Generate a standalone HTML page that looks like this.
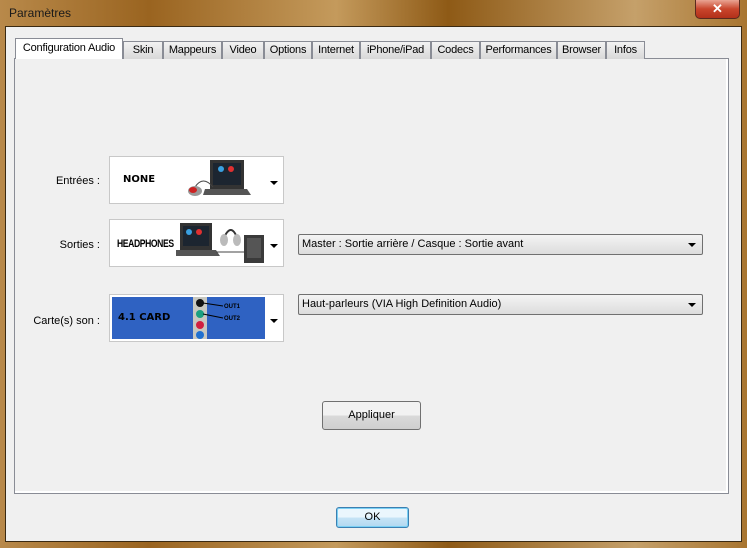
<!DOCTYPE html>
<html><head><meta charset="utf-8"><style>
*{margin:0;padding:0;box-sizing:border-box}
body{width:747px;height:548px;overflow:hidden;position:relative;font-family:"Liberation Sans",sans-serif;font-size:11px;color:#000;
background:linear-gradient(90deg,#b8894a 0%,#9a6420 20%,#c49a5c 45%,#8e5a16 60%,#c5a06a 85%,#a87530 100%)}
.abs{position:absolute}
.title{left:9px;top:6px;font-size:12px;color:#1a1a1a}
.close{left:695px;top:0;width:45px;height:19px;border:1px solid #5a2a1e;border-top:none;border-radius:0 0 5px 5px;background:linear-gradient(#e9a493,#c9452c 50%,#b2301a);color:#fff;font-weight:bold;font-size:13px;text-align:center;line-height:18px}
.client{left:5px;top:26px;width:737px;height:516px;background:#f0f0f0;border:1px solid #3b2a12}
.panel{left:14px;top:58px;width:715px;height:436px;background:#f0f0f0;border:1px solid #898c95;box-shadow:inset -2px -2px 0 #fff}
.tab{top:41px;height:18px;border:1px solid #898c95;border-bottom:none;background:linear-gradient(#f2f2f2,#d8d8d8);text-align:center;line-height:16px;font-size:11px;letter-spacing:-0.2px;white-space:nowrap}
.tab.sel{top:38px;height:21px;background:#fff;line-height:18px;z-index:2}
.lbl{width:90px;left:10px;text-align:right;font-size:11px}
.box{left:109px;width:175px;height:48px;background:#fff;border:1px solid #c8c8c8}
.arr{position:absolute;right:5px;width:0;height:0;border-left:4px solid transparent;border-right:4px solid transparent;border-top:4px solid #000}
.combo{left:298px;width:405px;height:21px;border:1px solid #707070;border-radius:2px;background:linear-gradient(#f4f4f4,#dcdcdc);font-size:11px;line-height:19px;padding-left:3px}
.combo .arr{top:8px;right:6px}
.btn{border:1px solid #707070;border-radius:3px;background:linear-gradient(#f2f2f2 50%,#dadada 50%,#cfcfcf);text-align:center;font-size:11px}
</style></head><body>
<div class="abs title">Paramètres</div>
<div class="abs close">✕</div>
<div class="abs client"></div>
<div class="abs panel"></div>
<div class="abs tab sel" style="left:15px;width:108px">Configuration Audio</div>
<div class="abs tab" style="left:123px;width:40px">Skin</div>
<div class="abs tab" style="left:163px;width:59px">Mappeurs</div>
<div class="abs tab" style="left:222px;width:42px">Video</div>
<div class="abs tab" style="left:264px;width:48px">Options</div>
<div class="abs tab" style="left:312px;width:48px">Internet</div>
<div class="abs tab" style="left:360px;width:71px">iPhone/iPad</div>
<div class="abs tab" style="left:431px;width:49px">Codecs</div>
<div class="abs tab" style="left:480px;width:77px">Performances</div>
<div class="abs tab" style="left:557px;width:49px">Browser</div>
<div class="abs tab" style="left:606px;width:39px">Infos</div>

<div class="abs lbl" style="top:175px">Entrées :</div>
<div class="abs lbl" style="top:239px">Sorties :</div>
<div class="abs lbl" style="top:315px">Carte(s) son :</div>

<div class="abs box" style="top:156px">
 <div class="abs" style="left:13px;top:17px;font-weight:bold;font-size:10px;font-family:'DejaVu Sans',sans-serif">NONE</div>
 <svg class="abs" style="left:75px;top:0" width="75" height="46">
  <rect x="25" y="3" width="34" height="29" fill="#333"/><rect x="28" y="6" width="28" height="22" fill="#1c2530"/>
  <circle cx="36" cy="12" r="3" fill="#3aa0e0"/><circle cx="46" cy="12" r="3" fill="#e03030"/>
  <polygon points="20,32 62,32 66,38 18,38" fill="#555"/>
  <path d="M10 30 Q18 18 28 30" stroke="#444" fill="none"/>
  <ellipse cx="10" cy="34" rx="7" ry="5" fill="#999"/><ellipse cx="8" cy="33" rx="4" ry="3" fill="#c22"/>
 </svg>
 <div class="arr" style="top:24px"></div>
</div>
<div class="abs box" style="top:219px">
 <div class="abs" style="left:7px;top:18px;font-weight:bold;font-size:11px;letter-spacing:-0.5px;transform:scaleX(0.78);transform-origin:left">HEADPHONES</div>
 <svg class="abs" style="left:66px;top:0" width="90" height="46">
  <rect x="4" y="3" width="32" height="27" fill="#333"/><rect x="7" y="6" width="26" height="20" fill="#1c2530"/>
  <circle cx="13" cy="12" r="3" fill="#3aa0e0"/><circle cx="23" cy="12" r="3" fill="#e03030"/>
  <polygon points="0,30 40,30 44,36 0,36" fill="#555"/>
  <path d="M40 32 L70 32" stroke="#444"/>
  <path d="M47 20 Q55 0 62 20" stroke="#333" stroke-width="2" fill="none"/>
  <ellipse cx="48" cy="20" rx="4" ry="6" fill="#bbb"/><ellipse cx="61" cy="20" rx="4" ry="6" fill="#bbb"/>
  <rect x="68" y="15" width="20" height="28" fill="#3a3a3a"/><rect x="71" y="18" width="14" height="20" fill="#555"/>
 </svg>
 <div class="arr" style="top:24px"></div>
</div>
<div class="abs box" style="top:294px">
 <div class="abs" style="left:2px;top:2px;width:153px;height:42px;background:#2f62c2"></div>
 <div class="abs" style="left:8px;top:17px;font-weight:bold;font-size:10px;font-family:'DejaVu Sans',sans-serif">4.1 CARD</div>
 <svg class="abs" style="left:83px;top:2px" width="72" height="42">
  <rect x="0" y="0" width="14" height="42" fill="#c8c8c0"/>
  <circle cx="7" cy="6" r="4" fill="#111"/><circle cx="7" cy="17" r="4" fill="#1aa080"/>
  <circle cx="7" cy="28" r="4" fill="#d02040"/><circle cx="7" cy="38" r="4" fill="#2070d0"/>
  <path d="M10 6 L30 9 M10 17 L30 21" stroke="#000"/>
  <text x="31" y="11" font-size="6" font-weight="bold" font-family="Liberation Sans">OUT1</text>
  <text x="31" y="23" font-size="6" font-weight="bold" font-family="Liberation Sans">OUT2</text>
 </svg>
 <div class="arr" style="top:24px"></div>
</div>

<div class="abs combo" style="top:234px">Master : Sortie arrière / Casque : Sortie avant<div class="arr"></div></div>
<div class="abs combo" style="top:294px">Haut-parleurs (VIA High Definition Audio)<div class="arr"></div></div>

<div class="abs btn" style="left:322px;top:401px;width:99px;height:29px;line-height:27px">Appliquer</div>
<div class="abs btn" style="left:336px;top:507px;width:73px;height:21px;line-height:19px;border-color:#3c7fb1;background:linear-gradient(#eaf6fd 50%,#c6e4f6 50%,#b2d8f0);box-shadow:inset 0 0 0 1px #7ad0f4">OK</div>
</body></html>
